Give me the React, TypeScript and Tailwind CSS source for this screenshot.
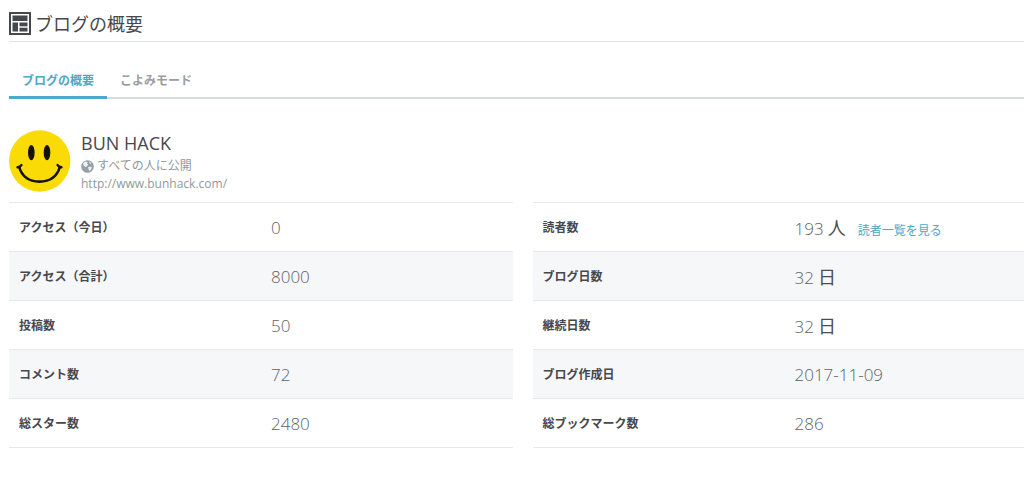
import type { ReactNode } from 'react';

interface Stat {
  label: string;
  value: string;
  unit?: string;
  extra?: ReactNode;
}

const leftStats: Stat[] = [
  { label: 'アクセス（今日）', value: '0' },
  { label: 'アクセス（合計）', value: '8000' },
  { label: '投稿数', value: '50' },
  { label: 'コメント数', value: '72' },
  { label: '総スター数', value: '2480' },
];

const rightStats: Stat[] = [
  {
    label: '読者数',
    value: '193',
    unit: '人',
    extra: (
      <a href="#readers" className="ml-3 text-xs text-[#4ba9c9] hover:underline">
        読者一覧を見る
      </a>
    ),
  },
  { label: 'ブログ日数', value: '32', unit: '日' },
  { label: '継続日数', value: '32', unit: '日' },
  { label: 'ブログ作成日', value: '2017-11-09' },
  { label: '総ブックマーク数', value: '286' },
];

function StatTable({ stats }: { stats: Stat[] }) {
  return (
    <table className="w-full table-fixed border-collapse border-y border-[#e6e9ea]">
      <tbody>
        {stats.map((s) => (
          <tr key={s.label} className="h-[49px] border-b border-[#e6e9ea] even:bg-[#f6f7f9]">
            <th scope="row" className="w-[262px] px-[10px] pt-[2px] text-left text-xs font-bold text-[#47484c]">
              {s.label}
            </th>
            <td className="whitespace-nowrap pt-[2px] leading-6">
              <span className="text-[17px] font-light text-[#606265]">{s.value}</span>
              {s.unit && <span className="ml-1 text-lg text-[#4c4d50]">{s.unit}</span>}
              {s.extra}
            </td>
          </tr>
        ))}
      </tbody>
    </table>
  );
}

function BlogIcon() {
  return (
    <svg viewBox="0 0 22 23" className="h-[23px] w-[22px]" aria-hidden="true">
      <rect width="22" height="23" rx="0.5" fill="#46474c" />
      <rect x="2" y="2" width="18" height="19" fill="#fff" />
      <g fill="#46474c">
        <rect x="3.5" y="3.5" width="15" height="5.5" />
        <rect x="3.5" y="10.5" width="5.5" height="9" />
        <rect x="10.5" y="10.5" width="8" height="3.8" />
        <rect x="10.5" y="15.7" width="8" height="3.8" />
      </g>
    </svg>
  );
}

function Smiley() {
  return (
    <svg viewBox="0 0 62 62" className="size-[62px]" role="img" aria-label="BUN HACK">
      <circle cx="30.7" cy="31" r="30.7" fill="#fbdb06" />
      <ellipse cx="22.3" cy="22.7" rx="3.3" ry="7.6" fill="#15120a" />
      <ellipse cx="38" cy="22.7" rx="3.3" ry="7.6" fill="#15120a" />
      <path
        d="M10 36.5C13 47 21 51.6 30.5 51.6S48 47 51 36.5"
        fill="none"
        stroke="#15120a"
        strokeWidth="2.6"
      />
      <path
        d="M8.5 37.3Q11.5 37 12.5 35M52.5 37.3Q49.5 37 48.5 35"
        fill="none"
        stroke="#15120a"
        strokeWidth="2.4"
        strokeLinecap="round"
      />
    </svg>
  );
}

function GlobeIcon() {
  return (
    <svg viewBox="0 0 13 13" className="size-[13px]" aria-hidden="true">
      <circle cx="6.5" cy="6.5" r="6.3" fill="#94a0a5" />
      <path d="M2 3.2L4.2 1.6 6.6 2 6 3.8 7.3 4.6 5.8 6.6 4.2 7 2.6 5.6Z" fill="#eef1f2" />
      <path d="M8.2 1.4L10.6 2.8 9.6 4 8.3 3Z" fill="#dfe4e6" />
      <path d="M7 7.2L9.2 6.4 11 7.6 9.8 9.8 8.2 11 7.6 9.2Z" fill="#eef1f2" />
    </svg>
  );
}

export default function App() {
  return (
    <main className="min-h-screen overflow-hidden bg-white pl-[9px] font-['Open_Sans','Noto_Sans_CJK_JP',sans-serif] text-[#47484c]">
      <header className="flex h-[42px] items-center gap-1 border-b border-[#dfe4e6] pt-[6px]">
        <BlogIcon />
        <h1 className="text-lg leading-6">ブログの概要</h1>
      </header>

      <nav className="mt-6 flex border-b-2 border-[#d8dbdd] text-xs font-bold leading-[30px]">
        <a href="#overview" className="-mb-[2px] border-b-[3px] border-[#4ba9c9] px-[13px] text-[#4ba9c9]">
          ブログの概要
        </a>
        <a href="#calendar" className="px-[13px] text-[#999ea1]">
          こよみモード
        </a>
      </nav>

      <section className="mt-[31px] flex gap-[10px]">
        <Smiley />
        <div>
          <h2 className="text-lg leading-[27px]">BUN HACK</h2>
          <p className="flex items-center gap-[3px] text-xs leading-[18px] text-[#8f999d]">
            <GlobeIcon />
            すべての人に公開
          </p>
          <a href="http://www.bunhack.com/" className="block text-xs leading-[17px] text-[#8f999d]">
            http://www.bunhack.com/
          </a>
        </div>
      </section>

      <div className="-mr-3 mt-[10px] grid grid-cols-2 gap-5">
        <StatTable stats={leftStats} />
        <StatTable stats={rightStats} />
      </div>
    </main>
  );
}
